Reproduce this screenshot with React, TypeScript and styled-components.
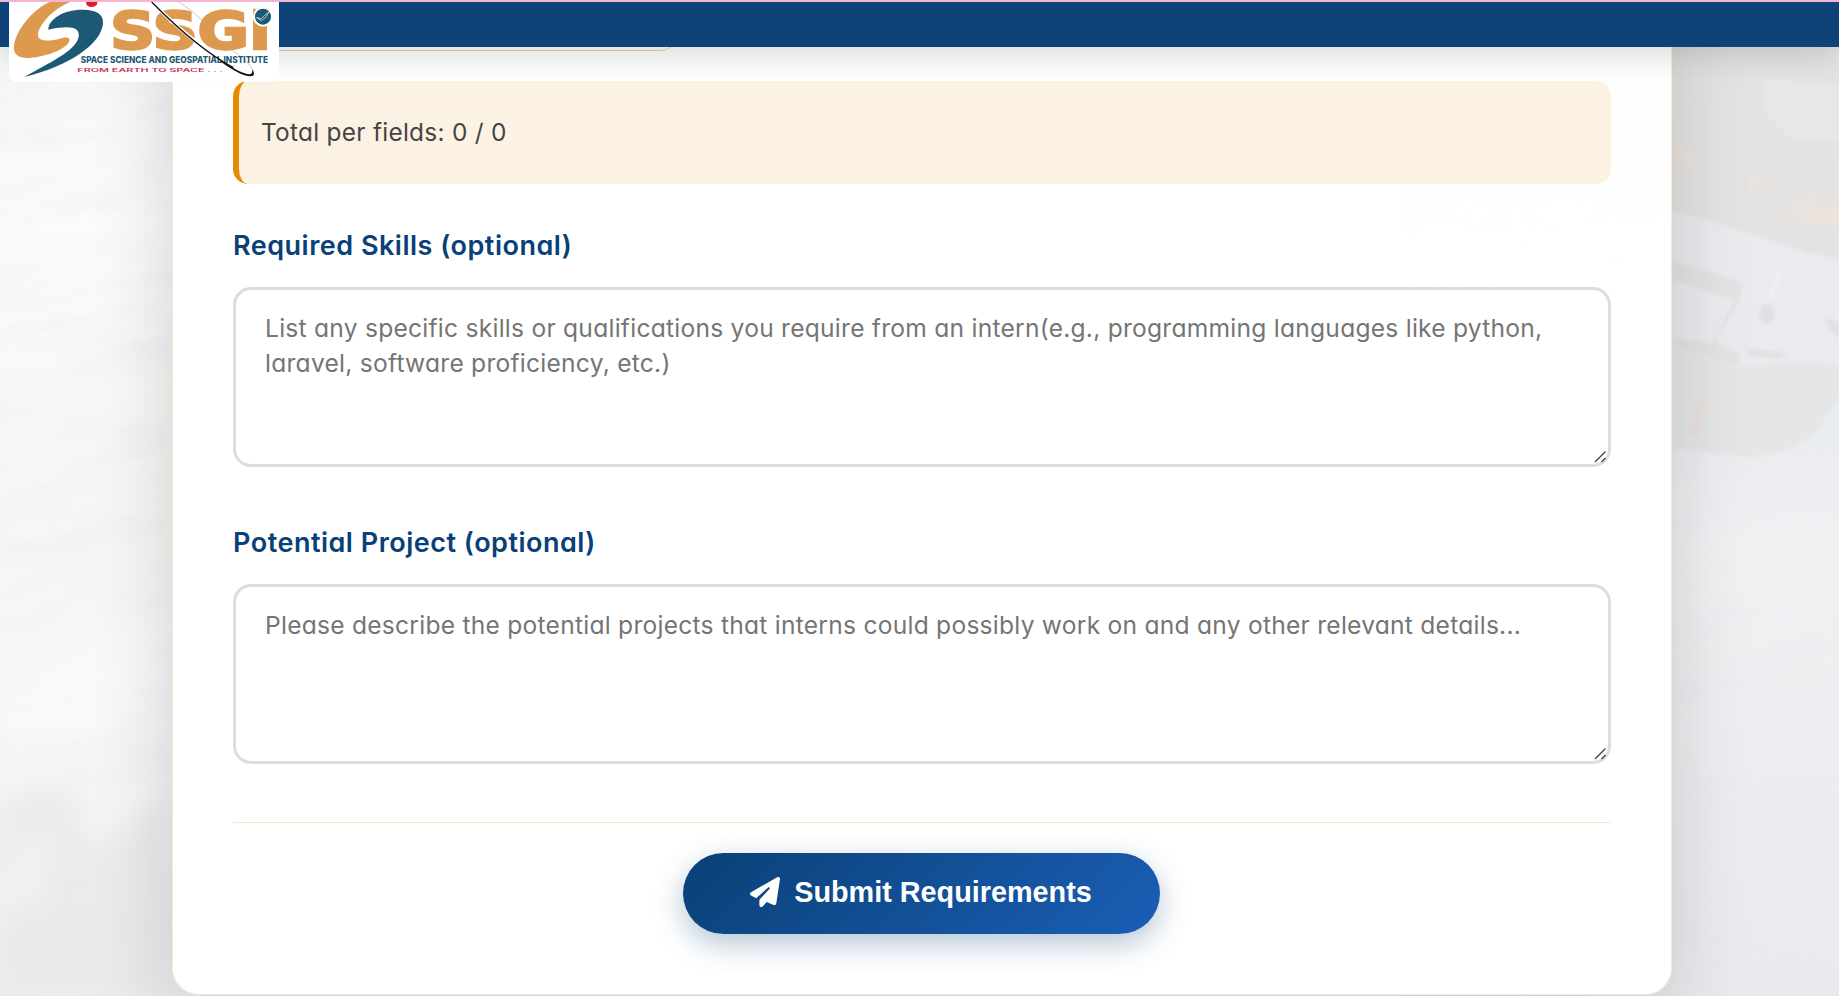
import React from "react";
import styled, { createGlobalStyle } from "styled-components";
import { FaPaperPlane } from "react-icons/fa6";

const GlobalStyle = createGlobalStyle`
  *, *::before, *::after { box-sizing: border-box; }
  html, body { margin: 0; height: 996px; overflow: hidden; }
  body {
    font-family: Inter, "Open Sans", sans-serif;
    font-feature-settings: "cv11";
    color: #444;
    background: #f3f4f5;
  }
`;

const Page = styled.div`
  position: relative;
  height: 996px;
  overflow: hidden;
`;

const Backdrop = styled.svg`
  position: absolute;
  inset: 0;
  width: 100%;
  height: 100%;
`;

const Header = styled.header`
  position: relative;
  z-index: 2;
  height: 47px;
  padding-left: 9px;
  background: #0d4379;
  border-top: 2px solid #f6b3cf;
  box-shadow: 0 8px 32px rgba(0, 0, 0, 0.15);
`;

const LogoPlate = styled.div`
  width: 270px;
  height: 80px;
  background: #fff;
  border-radius: 0 0 8px 8px;

  svg { display: block; overflow: visible; }
`;

const Card = styled.main`
  position: relative;
  z-index: 1;
  width: 1500px;
  margin: -40px 0 0 172px;
  padding: 0 60px 60px;
  background: rgba(255, 255, 255, 0.96);
  border: 1px solid #f8e8cf;
  border-top: 0;
  border-radius: 0 0 27px 27px;
  box-shadow: 0 20px 80px rgba(0, 0, 0, 0.16);
`;

const FieldsPanel = styled.div`
  width: 443px;
  height: 44px;
  margin-bottom: 30px;
  border: 1px solid #efcf9c;
  border-radius: 0 0 15px 15px;
`;

const Summary = styled.div`
  display: flex;
  align-items: center;
  height: 103px;
  padding: 0 22px 2px;
  background: #fcf2e4;
  border-left: 6px solid #e68a00;
  border-radius: 15px;
  font-size: 24.4px;
  letter-spacing: 0.28px;
`;

const Field = styled.section<{ $gap: number }>`
  display: flex;
  flex-direction: column;
  gap: 22px;
  margin-top: ${(p) => p.$gap}px;
`;

const Label = styled.label`
  height: 40px;
  line-height: 41px;
  font-size: 27px;
  font-weight: 600;
  letter-spacing: 0.5px;
  color: #0a4078;
`;

const TextAreaFrame = styled.div`
  position: relative;
`;

const TextArea = styled.textarea`
  display: block;
  width: 100%;
  height: 180px;
  padding: 21px 29px;
  background: #fff;
  border: 3px solid #ddd;
  border-radius: 18px;
  resize: none;
  font: 400 24.6px/35px Inter, "Open Sans", sans-serif;
  font-feature-settings: "cv11";
  letter-spacing: 0.24px;

  &::placeholder { color: #757575; opacity: 1; }
`;

const Grip = styled.svg`
  position: absolute;
  right: 4px;
  bottom: 4px;
  cursor: ns-resize;
`;

const Actions = styled.footer`
  display: flex;
  justify-content: center;
  margin-top: 58px;
  padding-top: 30px;
  border-top: 1px solid #f8e6c6;
`;

const SubmitButton = styled.button`
  display: flex;
  align-items: center;
  justify-content: center;
  gap: 14px;
  width: 477px;
  height: 81px;
  margin-right: 1px;
  padding: 0 1px 3px 0;
  border: 0;
  border-radius: 41px;
  background: linear-gradient(135deg, #0a4076, #1a5eb5);
  box-shadow: 0 10px 30px rgba(10, 64, 118, 0.3);
  color: #fff;
  font: 700 28.8px "Liberation Sans", Arial, sans-serif;
`;

function CloudBackdrop() {
  return (
    <Backdrop viewBox="0 0 1839 996" preserveAspectRatio="none" aria-hidden="true">
      <defs>
        <linearGradient id="sky" x2="0" y2="1">
          <stop offset="0" stopColor="#f3f4f6" />
          <stop offset=".2" stopColor="#fbfbfb" />
          <stop offset=".5" stopColor="#f6f6f5" />
          <stop offset=".7" stopColor="#f7f8f8" />
          <stop offset="1" stopColor="#eeeff1" />
        </linearGradient>
        <linearGradient id="haze" x2="0" y2="1">
          <stop offset="0" stopColor="#e6e6e6" />
          <stop offset=".4" stopColor="#e9ebee" />
          <stop offset=".55" stopColor="#f0f1f3" />
          <stop offset="1" stopColor="#e9eaed" />
        </linearGradient>
        <filter id="cloud" x="0" y="0" width="100%" height="100%">
          <feTurbulence type="fractalNoise" baseFrequency=".009 .03" numOctaves="5" seed="8" />
          <feColorMatrix values="0 0 0 0 .82  0 0 0 0 .83  0 0 0 0 .86  1.8 0 0 0 -.76" />
        </filter>
        <filter id="soft"><feGaussianBlur stdDeviation="12" /></filter>
        <filter id="edge"><feGaussianBlur stdDeviation="1.5" /></filter>
      </defs>
      <rect width="1400" height="996" fill="url(#sky)" />
      <rect x="1400" width="439" height="996" fill="url(#haze)" />
      <g transform="rotate(-10 0 500)">
        <rect x="-200" y="-100" width="2200" height="1500" filter="url(#cloud)" opacity=".5" />
      </g>
      <g filter="url(#soft)">
        <path d="M0 800L60 780L95 850L172 800V996H0Z" fill="#e4e6e8" opacity=".6" />
        <path d="M0 700L100 650L172 620V690L70 740L0 760Z" fill="#fbfbfb" opacity=".5" />
        <path d="M20 850L55 825L40 900L0 910Z" fill="#f7f7f7" opacity=".6" />
      </g>
      <g filter="url(#edge)">
        <path d="M1660 40H1839V260L1760 240L1660 208Z" fill="#e4e3e2" />
        <path d="M1764 78L1839 84V142L1790 138L1764 112Z" fill="#e5e7e9" />
        <path d="M1672 145L1693 153L1696 171L1672 162ZM1788 208L1812 193L1820 210L1839 201V226L1790 218ZM1745 178L1770 181L1750 190Z" fill="#ebe3dd" />
        <path d="M1672 211L1720 224L1839 262V378L1672 345Z" fill="#e9ebef" />
        <path d="M1672 260L1743 283L1740 301L1715 341L1739 354V366L1672 345V338L1713 342L1734 300L1672 279Z" fill="#e3e3e3" />
        <path d="M1672 346L1739 366L1810 361L1839 367V395L1818 430Q1790 455 1750 457L1672 448Z" fill="#e5e6e6" />
        <path d="M1823 315L1839 322V338L1829 330ZM1745 348L1788 352L1780 359L1750 357Z" fill="#e1e2e3" />
        <ellipse cx="1767" cy="314" rx="8" ry="10" fill="#dfe0e2" />
        <path d="M1697 400L1710 402L1700 432L1689 438Z" fill="#e7e1de" />
        <path d="M1780 272L1770 300" stroke="#f0f1f3" strokeWidth="3" />
        <path d="M1818 430L1839 402V436L1815 444Z" fill="#e9edf1" />
      </g>
    </Backdrop>
  );
}

function Logo() {
  return (
    <LogoPlate>
      <svg width="270" height="80" viewBox="27 6 810 240" role="img" aria-label="SSGi">
        <clipPath id="plate"><rect x="27" y="6" width="810" height="240" /></clipPath>
        <g clipPath="url(#plate)">
          <path d="M149 6C100 28 50 86 42 136C38 164 56 176 90 174C140 170 198 148 208 124C212 112 199 110 180 116C147 125 113 124 114 104C116 76 158 26 211 6Z" fill="#dd994e" />
          <path d="M145 89C145 58 190 29 246 29C288 28 312 43 309 71C303 131 210 197 73 231C150 187 226 154 236 111C241 78 206 77 145 89Z" fill="#1d5875" />
          <ellipse cx="275" cy="8" rx="17" ry="13" fill="#e31837" />
        </g>
        <text x="330" y="147" fontFamily="DejaVu Sans, sans-serif" fontSize="153" fontWeight="700" fill="#dd994e" stroke="#dd994e" strokeWidth="7" textLength="482" lengthAdjust="spacingAndGlyphs">SSGi</text>
        <circle cx="789" cy="50" r="27" fill="#1d5875" stroke="#fff" strokeWidth="6" />
        <path d="M770 53L784 62Q800 54 807 36Q793 46 784 56Z" fill="#1d5875" stroke="#fff" strokeWidth="2" />
        <path d="M537 6Q580 32 617 72M690 147Q742 178 762 215" fill="none" stroke="#aaa" strokeWidth="2" />
        <text x="242" y="189" fontFamily="Inter, sans-serif" fontSize="27" fontWeight="800" fill="#1d5875" textLength="562" lengthAdjust="spacingAndGlyphs">SPACE SCIENCE AND GEOSPATIAL INSTITUTE</text>
        <text x="232" y="215" fontFamily="Inter, sans-serif" fontSize="15.5" fontWeight="600" fill="#cc3450" textLength="436" lengthAdjust="spacingAndGlyphs">FROM EARTH TO SPACE . . .</text>
        <path d="M455 6C500 50 560 105 610 142" fill="none" stroke="#fff" strokeWidth="10" />
        <path d="M455 6C520 72 610 155 700 203" fill="none" stroke="#111" strokeWidth="4" />
        <path d="M660 180Q735 228 752 222Q758 220 757 208Q769 229 751 229Q725 230 660 184Z" fill="#111" />
      </svg>
    </LogoPlate>
  );
}

interface NotesFieldProps {
  id: string;
  label: string;
  placeholder: string;
  gap: number;
}

function NotesField({ id, label, placeholder, gap }: NotesFieldProps) {
  return (
    <Field $gap={gap}>
      <Label htmlFor={id}>{label}</Label>
      <TextAreaFrame>
        <TextArea id={id} placeholder={placeholder} />
        <Grip width="13" height="13" viewBox="0 0 13 13" stroke="#444" strokeWidth="1.4">
          <path d="M1 12L11.500 1.500M7.500 12L11.500 8" />
        </Grip>
      </TextAreaFrame>
    </Field>
  );
}

export default function App() {
  return (
    <Page>
      <GlobalStyle />
      <CloudBackdrop />
      <Header>
        <Logo />
      </Header>
      <Card>
        <FieldsPanel />
        <Summary><span>Total per fields: 0 / 0</span></Summary>
        <NotesField
          id="skills"
          label="Required Skills (optional)"
          gap={41}
          placeholder="List any specific skills or qualifications you require from an intern(e.g., programming languages like python, laravel, software proficiency, etc.)"
        />
        <NotesField
          id="project"
          label="Potential Project (optional)"
          gap={55}
          placeholder="Please describe the potential projects that interns could possibly work on and any other relevant details..."
        />
        <Actions>
          <SubmitButton type="button">
            <FaPaperPlane size={30} />
            Submit Requirements
          </SubmitButton>
        </Actions>
      </Card>
    </Page>
  );
}
